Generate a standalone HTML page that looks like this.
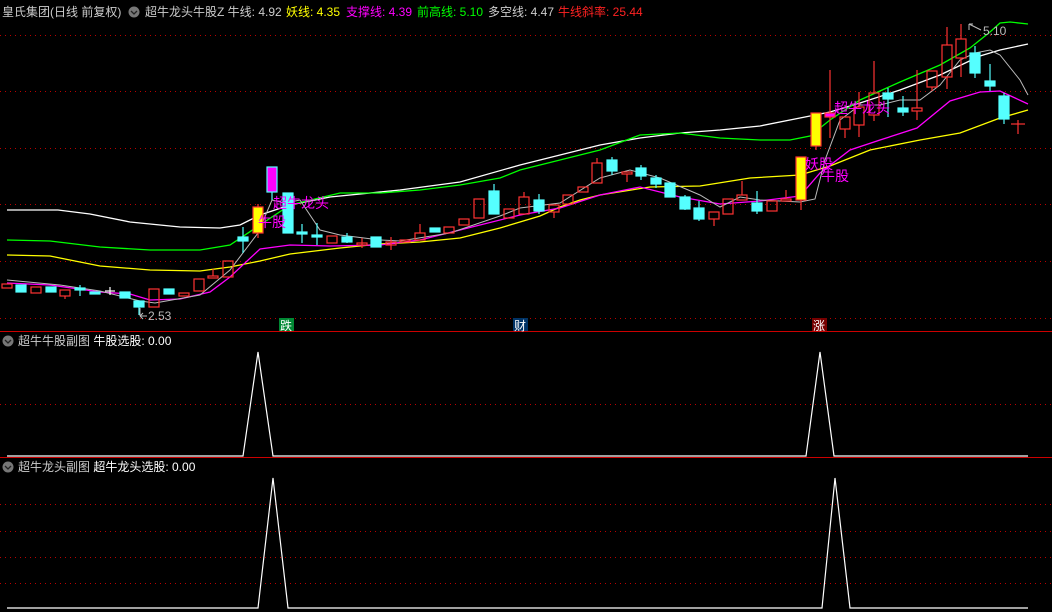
<!DOCTYPE html>
<html><head><meta charset="utf-8"><style>
html,body{margin:0;padding:0;background:#000;width:1052px;height:612px;overflow:hidden}
svg{display:block}
text{font-family:"Liberation Sans","Noto Sans CJK SC",sans-serif}
</style></head><body>
<svg width="1052" height="612" viewBox="0 0 1052 612" xmlns="http://www.w3.org/2000/svg">
<rect width="1052" height="612" fill="#000"/>
<!-- grid -->
<g stroke="#b00" stroke-width="1" stroke-dasharray="1,4">
<line x1="0" y1="35.5" x2="1052" y2="35.5"/>
<line x1="0" y1="91.5" x2="1052" y2="91.5"/>
<line x1="0" y1="148.5" x2="1052" y2="148.5"/>
<line x1="0" y1="204.5" x2="1052" y2="204.5"/>
<line x1="0" y1="261.5" x2="1052" y2="261.5"/>
<line x1="0" y1="318.5" x2="1052" y2="318.5"/>
<line x1="0" y1="404.5" x2="1052" y2="404.5"/>
<line x1="0" y1="504.5" x2="1052" y2="504.5"/>
<line x1="0" y1="531.5" x2="1052" y2="531.5"/>
<line x1="0" y1="557.5" x2="1052" y2="557.5"/>
<line x1="0" y1="583.5" x2="1052" y2="583.5"/>
</g>
<line x1="0" y1="331.5" x2="1052" y2="331.5" stroke="#c00"/>
<line x1="0" y1="457.5" x2="1052" y2="457.5" stroke="#c00"/>

<!-- lines -->
<g fill="none" stroke-width="1.3">
<polyline stroke="#fff" points="7,210 58,210 90,214 130,222 180,227 220,228 240,225 260,215 290,205 330,197 400,190 460,182 520,165 560,155 600,145 640,138 680,133 720,130 760,126 800,118 830,112 860,103 900,90 940,75 980,56 1000,50 1028,44"/>
<polyline stroke="#0f0" points="7,240 50,241 100,247 150,250 200,250 230,245 260,225 290,205 340,193 380,193 420,190 460,185 500,178 520,170 560,160 600,150 640,135 680,133 720,138 760,140 790,140 810,136 830,120 860,100 900,82 940,65 970,48 990,32 1000,23 1010,22 1028,24"/>
<polyline stroke="#ff0" points="7,255 50,256 100,266 150,270 200,271 230,267 260,261 290,254 340,248 380,244 420,242 460,238 500,228 540,216 560,207 580,200 600,195 650,187 700,186 750,178 800,175 830,166 870,150 920,140 960,133 1000,118 1028,110"/>
<polyline stroke="#f0f" points="7,283 50,285 100,292 130,294 150,300 180,299 210,292 230,277 260,249 290,245 330,246 380,245 420,240 460,230 520,215 560,208 600,195 640,187 680,197 720,204 760,201 800,196 820,173 850,150 880,140 917,128 950,101 980,92 1000,91 1028,104"/>
<polyline stroke="#bbb" stroke-width="1" points="7,280 60,285 100,291 140,301 155,303 200,295 230,270 258,233 272,200 285,203 300,200 320,230 340,235 380,240 400,241 450,233 500,216 520,208 560,203 600,178 630,170 660,178 700,195 720,207 740,197 760,200 800,202 815,199 825,160 840,120 860,105 880,105 900,100 920,100 940,85 960,60 975,53 990,50 1000,55 1020,80 1028,95"/>
</g>

<!-- candles -->
<g stroke-width="1.2">
<g stroke="#f33" fill="none">
<rect x="2" y="284" width="10" height="4"/>
<rect x="31" y="287" width="10" height="6"/>
<rect x="60" y="290" width="10" height="6"/><line x1="65" y1="296" x2="65" y2="299"/>
<rect x="149" y="289" width="10" height="18"/>
<rect x="179" y="293" width="10" height="3"/>
<rect x="194" y="279" width="10" height="12"/>
<rect x="208" y="276" width="10" height="2"/><line x1="213" y1="269" x2="213" y2="276"/>
<rect x="223" y="261" width="10" height="16"/>
<rect x="327" y="236" width="10" height="7"/>
<rect x="357" y="243" width="10" height="2"/><line x1="362" y1="238" x2="362" y2="248"/>
<rect x="386" y="242" width="10" height="3"/><line x1="391" y1="237" x2="391" y2="250"/>
<rect x="400" y="240" width="10" height="2"/>
<rect x="415" y="233" width="10" height="7"/><line x1="420" y1="224" x2="420" y2="233"/>
<rect x="444" y="227" width="10" height="6"/>
<rect x="459" y="219" width="10" height="6"/>
<rect x="474" y="199" width="10" height="19"/>
<rect x="504" y="209" width="10" height="9"/>
<rect x="519" y="197" width="10" height="17"/><line x1="524" y1="192" x2="524" y2="197"/>
<rect x="549" y="205" width="10" height="7"/><line x1="554" y1="212" x2="554" y2="218"/>
<rect x="563" y="195" width="10" height="9"/>
<rect x="578" y="187" width="10" height="5"/>
<rect x="592" y="163" width="10" height="20"/><line x1="597" y1="158" x2="597" y2="163"/>
<rect x="622" y="172" width="10" height="2"/><line x1="627" y1="174" x2="627" y2="182"/>
<rect x="709" y="212" width="10" height="7"/><line x1="714" y1="219" x2="714" y2="226"/>
<rect x="723" y="199" width="10" height="15"/>
<rect x="737" y="195" width="10" height="5"/><line x1="742" y1="181" x2="742" y2="195"/>
<rect x="767" y="201" width="10" height="10"/>
<rect x="781" y="199" width="10" height="2"/><line x1="786" y1="190" x2="786" y2="199"/>
<rect x="840" y="117" width="10" height="12"/><line x1="845" y1="129" x2="845" y2="138"/>
<rect x="854" y="107" width="10" height="18"/><line x1="859" y1="92" x2="859" y2="107"/><line x1="859" y1="125" x2="859" y2="137"/>
<rect x="869" y="93" width="10" height="22"/><line x1="874" y1="61" x2="874" y2="93"/><line x1="874" y1="115" x2="874" y2="121"/>
<rect x="912" y="108" width="10" height="3"/><line x1="917" y1="70" x2="917" y2="108"/><line x1="917" y1="111" x2="917" y2="120"/>
<rect x="927" y="71" width="10" height="16"/><line x1="932" y1="87" x2="932" y2="91"/>
<rect x="942" y="45" width="10" height="32"/><line x1="947" y1="27" x2="947" y2="45"/><line x1="947" y1="77" x2="947" y2="89"/>
<rect x="956" y="39" width="10" height="19"/><line x1="961" y1="24" x2="961" y2="39"/><line x1="961" y1="58" x2="961" y2="77"/>
<line x1="1011" y1="124" x2="1025" y2="124"/><line x1="1018" y1="120" x2="1018" y2="134"/>
<line x1="801" y1="200" x2="801" y2="210"/><line x1="816" y1="146" x2="816" y2="150"/>
<line x1="258" y1="204" x2="258" y2="238"/>
</g>
<g stroke="#5ff" fill="#5ff">
<rect x="16" y="285" width="10" height="7"/>
<rect x="46" y="287" width="10" height="5"/>
<line x1="80" y1="285" x2="80" y2="296"/><rect x="75" y="288" width="10" height="2"/>
<rect x="90" y="292" width="10" height="2"/>
<rect x="120" y="292" width="10" height="6"/>
<rect x="134" y="301" width="10" height="6"/><line x1="139" y1="307" x2="139" y2="315"/>
<rect x="164" y="289" width="10" height="5"/>
<line x1="243" y1="227" x2="243" y2="253"/><rect x="238" y="237" width="10" height="4"/>
<rect x="283" y="193" width="10" height="40"/>
<line x1="302" y1="224" x2="302" y2="243"/><rect x="297" y="232" width="10" height="2"/>
<line x1="317" y1="223" x2="317" y2="245"/><rect x="312" y="235" width="10" height="2"/>
<line x1="347" y1="233" x2="347" y2="243"/><rect x="342" y="237" width="10" height="5"/>
<rect x="371" y="237" width="10" height="10"/>
<rect x="430" y="228" width="10" height="4"/>
<line x1="494" y1="184" x2="494" y2="214"/><rect x="489" y="191" width="10" height="23"/>
<line x1="539" y1="194" x2="539" y2="214"/><rect x="534" y="200" width="10" height="11"/>
<line x1="612" y1="157" x2="612" y2="175"/><rect x="607" y="160" width="10" height="11"/>
<line x1="641" y1="165" x2="641" y2="180"/><rect x="636" y="168" width="10" height="8"/>
<line x1="656" y1="175" x2="656" y2="188"/><rect x="651" y="178" width="10" height="6"/>
<rect x="665" y="183" width="10" height="14"/>
<line x1="685" y1="195" x2="685" y2="210"/><rect x="680" y="197" width="10" height="12"/>
<line x1="699" y1="201" x2="699" y2="221"/><rect x="694" y="208" width="10" height="11"/>
<line x1="757" y1="191" x2="757" y2="214"/><rect x="752" y="203" width="10" height="8"/>
<line x1="888" y1="88" x2="888" y2="117"/><rect x="883" y="93" width="10" height="6"/>
<line x1="903" y1="96" x2="903" y2="116"/><rect x="898" y="108" width="10" height="4"/>
<line x1="975" y1="46" x2="975" y2="78"/><rect x="970" y="53" width="10" height="20"/>
<line x1="990" y1="64" x2="990" y2="91"/><rect x="985" y="81" width="10" height="5"/>
<line x1="1004" y1="93" x2="1004" y2="124"/><rect x="999" y="96" width="10" height="23"/>
</g>
<line x1="105" y1="291" x2="115" y2="291" stroke="#fff"/><line x1="110" y1="287" x2="110" y2="295" stroke="#fff"/>
<rect x="253" y="207" width="10" height="26" fill="#ff0" stroke="#f33"/>
<rect x="267" y="167" width="10" height="25" fill="#f0f" stroke="#5ff"/>
<line x1="272" y1="192" x2="272" y2="200" stroke="#5ff"/>
<rect x="796" y="157" width="10" height="43" fill="#ff0" stroke="#f33"/>
<rect x="811" y="113" width="10" height="33" fill="#ff0" stroke="#f33"/>
<line x1="830" y1="70" x2="830" y2="138" stroke="#f33"/>
<rect x="825" y="113" width="10" height="4" fill="#f0f" stroke="#f33"/>
</g>

<!-- overlays text -->
<g fill="#f0f" font-size="14">
<text x="273" y="208">超牛龙头</text>
<text x="258" y="227">牛股</text>
<text x="834" y="113">超牛龙头</text>
<text x="805" y="169">妖股</text>
<text x="821" y="181">牛股</text>
</g>
<g fill="#bbb" font-size="12">
<text x="148" y="320">2.53</text>
<text x="983" y="35">5.10</text>
</g>
<path d="M140 316 L147 316 M140 316 L143 313 M140 316 L143 319 M140 308 L140 316" stroke="#bbb" fill="none"/>
<path d="M969 24 L981 30 M969 24 L969 30 M969 24 L973 24" stroke="#bbb" fill="none"/>

<!-- markers -->
<rect x="279" y="318" width="15" height="13" fill="#083"/>
<text x="280" y="330" fill="#fff" font-size="12">跌</text>
<rect x="513" y="318" width="15" height="13" fill="#036"/>
<text x="514" y="330" fill="#fff" font-size="12">财</text>
<rect x="812" y="318" width="15" height="13" fill="#700"/>
<text x="813" y="330" fill="#fff" font-size="12">涨</text>

<!-- header -->
<g font-size="12">
<text x="2" y="16" fill="#ccc">皇氏集团(日线 前复权)</text>
<circle cx="134" cy="12" r="5.5" fill="#777"/>
<path d="M131 11 L134 14 L137 11" stroke="#222" stroke-width="1.3" fill="none"/>
<text x="145" y="16" fill="#ccc">超牛龙头牛股Z 牛线: 4.92</text>
<text x="286" y="16" fill="#ff0">妖线: 4.35</text>
<text x="346" y="16" fill="#f0f">支撑线: 4.39</text>
<text x="417" y="16" fill="#0f0">前高线: 5.10</text>
<text x="488" y="16" fill="#ccc">多空线: 4.47</text>
<text x="558" y="16" fill="#f22">牛线斜率: 25.44</text>
</g>

<!-- sub panel 1 -->
<circle cx="8" cy="341" r="5.5" fill="#777"/>
<path d="M5 340 L8 343 L11 340" stroke="#222" stroke-width="1.3" fill="none"/>
<text x="18" y="345" fill="#ccc" font-size="12">超牛牛股副图 <tspan fill="#fff">牛股选股: 0.00</tspan></text>
<polyline fill="none" stroke="#fff" stroke-width="1.2" points="7,456 243,456 258,352 273,456 806,456 820,352 834,456 1028,456"/>

<!-- sub panel 2 -->
<circle cx="8" cy="467" r="5.5" fill="#777"/>
<path d="M5 466 L8 469 L11 466" stroke="#222" stroke-width="1.3" fill="none"/>
<text x="18" y="471" fill="#ccc" font-size="12">超牛龙头副图 <tspan fill="#fff">超牛龙头选股: 0.00</tspan></text>
<polyline fill="none" stroke="#fff" stroke-width="1.2" points="7,608 258,608 273,478 288,608 822,608 835,478 850,608 1028,608"/>
</svg>
</body></html>
